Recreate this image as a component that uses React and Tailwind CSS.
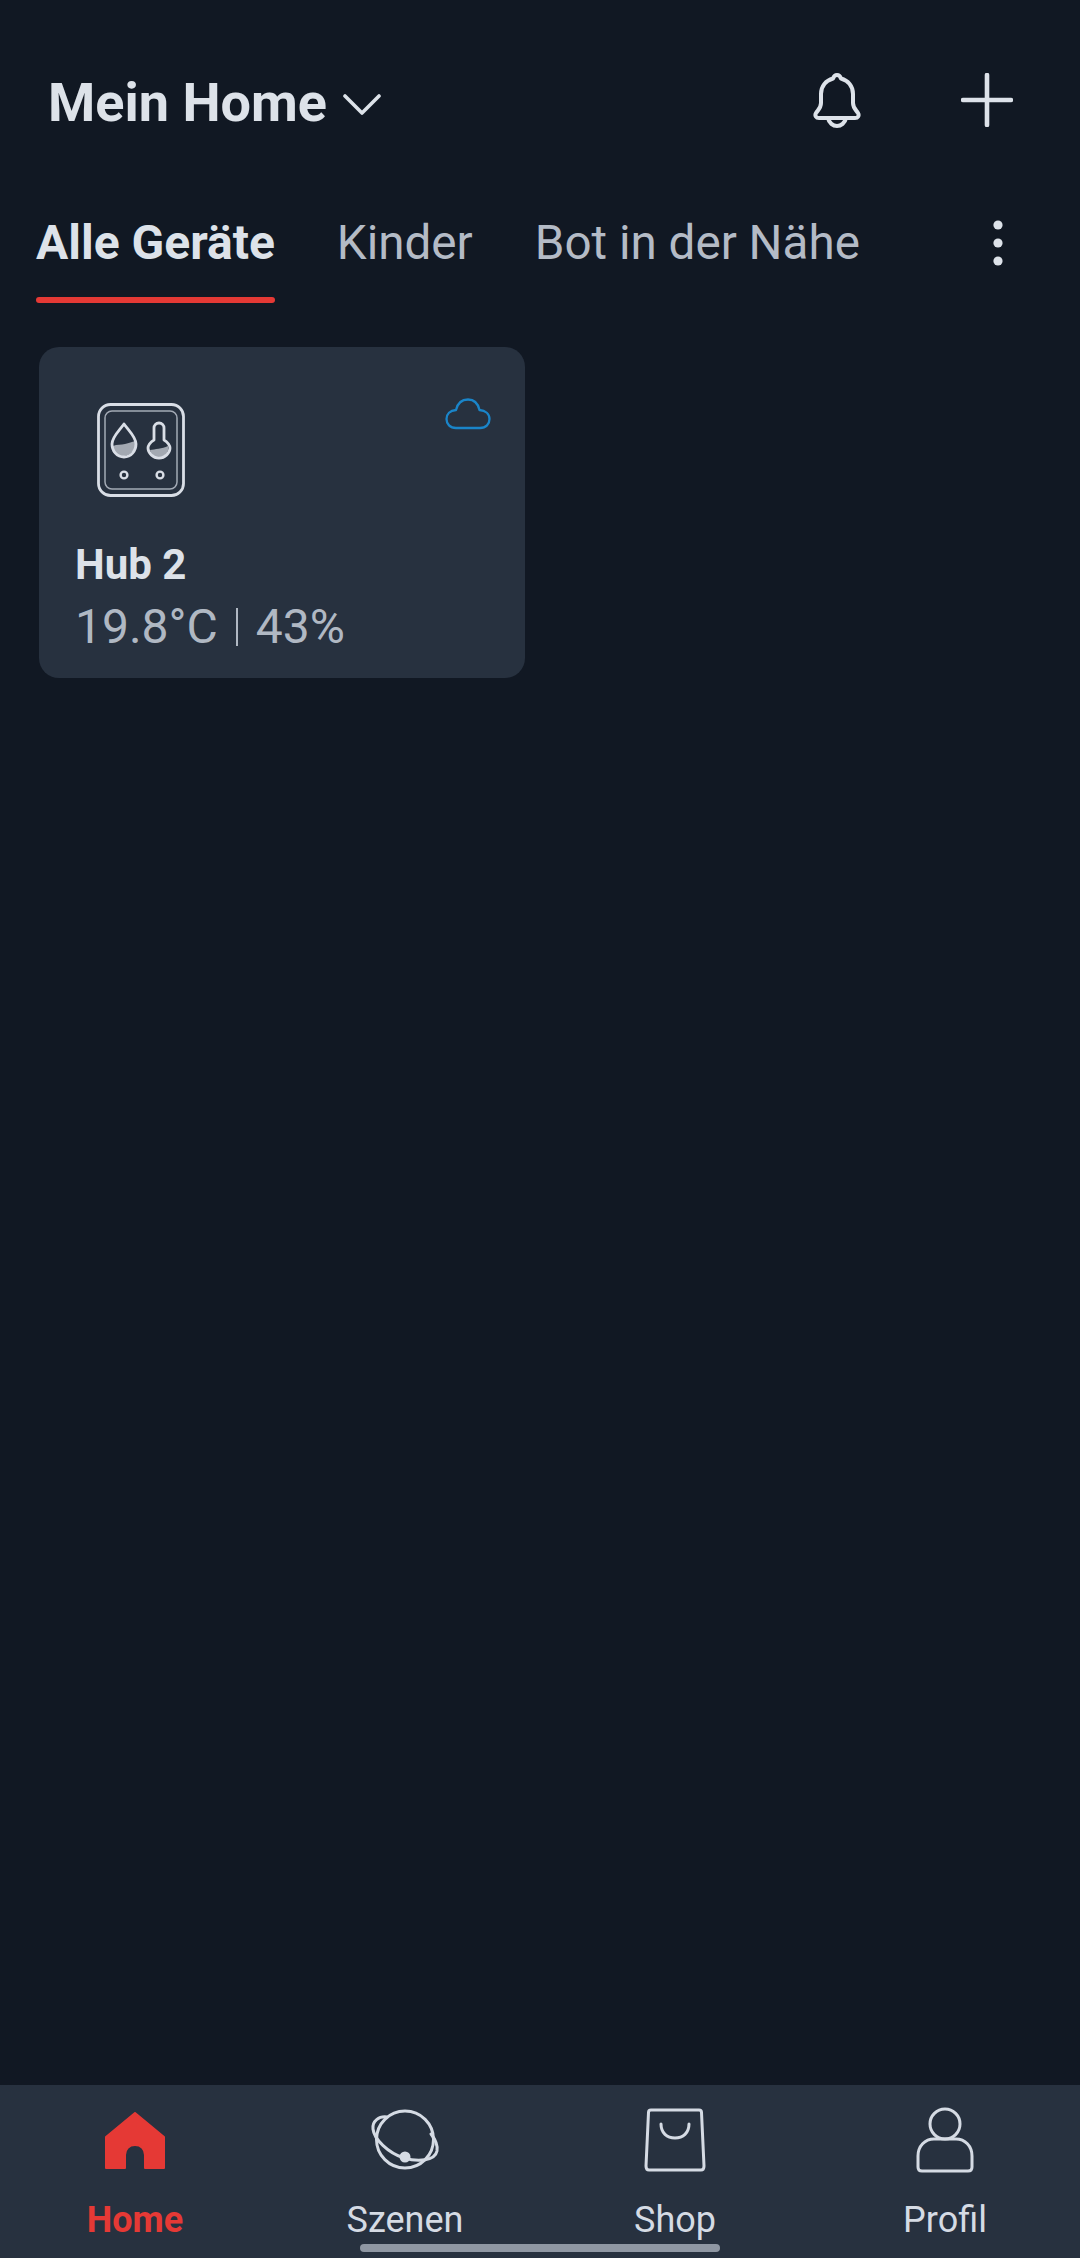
const font = { fontFamily: '"Roboto", "Liberation Sans", sans-serif' };

function Chevron() {
  return (
    <svg width="38" height="21" viewBox="0 0 38 21" fill="none" stroke="#dde2e9" strokeWidth="3.6" strokeLinecap="round" strokeLinejoin="round">
      <path d="M2 2 L19 19 L36 2" />
    </svg>
  );
}

function Bell() {
  return (
    <svg width="48" height="56" viewBox="0 0 48 56" fill="none" stroke="#dde2e9" strokeWidth="4" strokeLinecap="round" strokeLinejoin="round">
      <path d="M24 3 C21.5 3 20.5 5 20 6.5 C13 8.5 8 14 8 22 V31 C8 36 5 38 3 41 C1.5 43.5 3 46 6 46 H42 C45 46 46.5 43.5 45 41 C43 38 40 36 40 31 V22 C40 14 35 8.5 28 6.5 C27.500 5 26.500 3 24 3 Z" />
      <path d="M15 46 C16 51 20 54 24 54 C28 54 32 51 33 46" />
    </svg>
  );
}

function Plus() {
  return (
    <svg width="52" height="54" viewBox="0 0 52 54" fill="none" stroke="#dde2e9" strokeWidth="4.6" strokeLinecap="round">
      <path d="M26 2 V52 M2 27 H50" />
    </svg>
  );
}

function Dots() {
  return (
    <svg width="10" height="46" viewBox="0 0 10 46" fill="#dde2e9">
      <circle cx="5" cy="5" r="4.600" />
      <circle cx="5" cy="23" r="4.600" />
      <circle cx="5" cy="41" r="4.600" />
    </svg>
  );
}

function HubIcon() {
  return (
    <svg width="88" height="94" viewBox="0 0 88 94" fill="none" stroke="#d9dee6" strokeLinecap="round" strokeLinejoin="round">
      <rect x="1.500" y="1.500" width="85" height="91" rx="12" strokeWidth="2.800" />
      <rect x="8" y="8" width="72" height="78" rx="7" strokeWidth="1.500" stroke="#a3aab5" />
      <path d="M16 43 C20 41 24 42 28 41 C32 40 35 39 38 38 C39 42 37 48 33 51 C28 54 21 54 18 51 C15 49 15 46 16 43 Z" fill="#a3a9b2" stroke="none" />
      <path d="M27 21 C22 28 15 34 15 41 C15 48 20 54 27 54 C34 54 39 48 39 41 C39 34 32 28 27 21 Z" strokeWidth="2.800" />
      <path d="M53 47 C58 46 65 46 71 43 C72 48 70 51 66 53 C60 55 54 52 53 47 Z" fill="#a3a9b2" stroke="none" />
      <path d="M57 37 V25 C57 22 59 20 62 20 C65 20 67 22 67 25 V37 C71 39 73 43 73 45 C73 50 68 55 62 55 C56 55 51 50 51 45 C51 43 53 39 57 37 Z" strokeWidth="2.800" />
      <circle cx="27" cy="72" r="3.400" strokeWidth="2.400" />
      <circle cx="63" cy="72" r="3.400" strokeWidth="2.400" />
    </svg>
  );
}

function Cloud() {
  return (
    <svg width="46" height="32" viewBox="0 0 46 32" fill="none" stroke="#1a85c9" strokeWidth="2.300" strokeLinejoin="round">
      <path d="M11 30 C5 30 1.500 26 1.500 21 C1.500 16 5 12.500 11 12 C12.500 5.500 17 1.500 23 1.500 C29 1.500 33 5.500 34.500 12 C40.500 12.500 44.500 16 44.500 21 C44.500 26 41 30 35 30 Z" />
    </svg>
  );
}

function HomeIcon() {
  return (
    <svg width="60" height="57" viewBox="0 0 60 57" fill="#e53935" stroke="#e53935" strokeWidth="2" strokeLinejoin="round">
      <path d="M30 1 L59 25 V56 H40 V43 C40 37 36 33 30 33 C24 33 20 37 20 43 V56 H1 V25 Z" />
    </svg>
  );
}

function ScenesIcon() {
  return (
    <svg width="70" height="62" viewBox="0 0 70 62" fill="none" stroke="#d5dbe4" strokeWidth="3" strokeLinecap="round">
      <circle cx="35" cy="30.500" r="28.500" />
      <path d="M17 8 C9 7 2 12 3 20 C4 30 18 44 34 49 C48 53 65 52 67 42 C68 36 65 30 61 25" />
      <circle cx="35" cy="48" r="5.500" fill="#d5dbe4" stroke="none" />
    </svg>
  );
}

function BagIcon() {
  return (
    <svg width="62" height="64" viewBox="0 0 62 64" fill="none" stroke="#d5dbe4" strokeWidth="3" strokeLinecap="round" strokeLinejoin="round">
      <path d="M7 2 H55 C56.500 2 57.500 3 57.500 4.500 L60 58 C60 60.500 59 62 57 62 H5 C3 62 2 60.500 2 58 L4.500 4.500 C4.500 3 5.500 2 7 2 Z" />
      <path d="M17 16 C17 25 23 30 31 30 C39 30 45 25 45 16" />
    </svg>
  );
}

function PersonIcon() {
  return (
    <svg width="58" height="66" viewBox="0 0 58 66" fill="none" stroke="#d5dbe4" strokeWidth="3" strokeLinejoin="round">
      <circle cx="29" cy="17" r="15" />
      <path d="M18 32 H40 C49 32 56 39 56 49 V60 C56 62.500 54.500 64 52 64 H6 C3.500 64 2 62.500 2 60 V49 C2 39 9 32 18 32 Z" />
    </svg>
  );
}

function NavItem({ icon, label, active }) {
  return (
    <div className="flex flex-1 flex-col items-center">
      <div className="flex h-[66px] items-center justify-center">{icon}</div>
      <span className={active ? "mt-[27px] text-[36px] leading-[40px] font-bold text-[#e53935]" : "mt-[27px] text-[36px] leading-[40px] text-[#d5dbe4]"}>
        {label}
      </span>
    </div>
  );
}

export default function App() {
  return (
    <div className="relative flex h-[2258px] w-[1080px] flex-col overflow-hidden bg-[#111823]" style={font}>
      <header className="mt-[60px] flex h-[80px] items-center pr-[67px] pl-[48px]">
        <h1 className="pt-[6px] text-[54px] leading-[60px] font-bold text-[#dde2e9]">Mein Home</h1>
        <span className="ml-[16px] flex pt-[8px]"><Chevron /></span>
        <span className="ml-auto flex"><Bell /></span>
        <span className="ml-[100px] flex"><Plus /></span>
      </header>

      <nav className="mt-[60px] flex items-start pr-[77px] pl-[36px]">
        <div className="flex flex-col">
          <span className="text-[48px] leading-[86px] font-bold text-[#dde2e9]">Alle Geräte</span>
          <span className="mt-[11px] h-[6px] rounded-full bg-[#e53935]" />
        </div>
        <span className="ml-[62px] text-[47.6px] leading-[86px] text-[#b4bbc6]">Kinder</span>
        <span className="ml-[62px] text-[47.6px] leading-[86px] text-[#b4bbc6]">Bot in der Nähe</span>
        <span className="ml-auto flex h-[86px] items-center"><Dots /></span>
      </nav>

      <main className="flex-1 pt-[44px] pl-[39px]">
        <section className="relative h-[331px] w-[486px] rounded-[20px] bg-[#27313f] pl-[36px]">
          <div className="ml-[22px] pt-[56px]"><HubIcon /></div>
          <div className="mt-[44px] text-[42px] leading-[48px] font-bold text-[#dde2e9]">Hub 2</div>
          <div className="mt-[11px] flex items-center text-[48px] leading-[54px] text-[#b0b8c3]">
            <span>19.8°C</span>
            <span className="mx-[18px] h-[38px] w-[2px] bg-[#b0b8c3]" />
            <span>43%</span>
          </div>
          <span className="absolute top-[51px] right-[34px] flex"><Cloud /></span>
        </section>
      </main>

      <footer className="relative flex h-[173px] bg-[#27313f] pt-[22px]">
        <NavItem icon={<HomeIcon />} label="Home" active />
        <NavItem icon={<ScenesIcon />} label="Szenen" />
        <NavItem icon={<BagIcon />} label="Shop" />
        <NavItem icon={<PersonIcon />} label="Profil" />
        <span className="absolute bottom-[6px] left-[360px] h-[8px] w-[360px] rounded-full bg-[#8f97a3]" />
      </footer>
    </div>
  );
}
